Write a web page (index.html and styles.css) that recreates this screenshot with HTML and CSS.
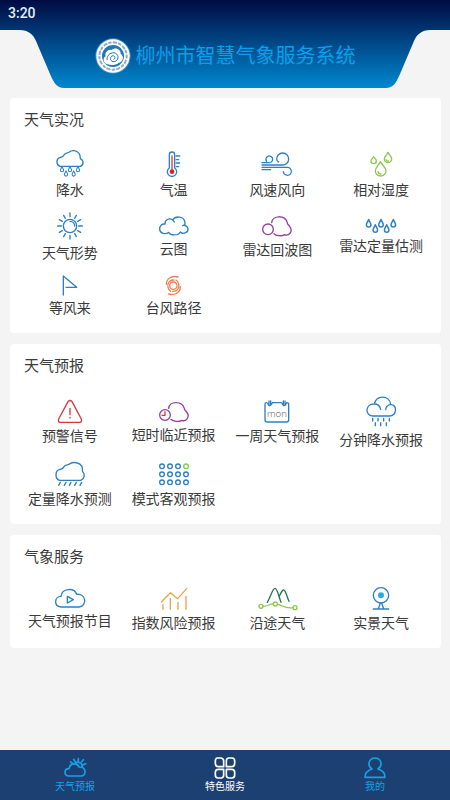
FILE: index.html
```html
<!DOCTYPE html>
<html lang="zh-CN">
<head>
<meta charset="utf-8">
<meta name="viewport" content="width=device-width, initial-scale=1">
<title>柳州市智慧气象服务系统</title>
<link rel="stylesheet" href="styles.css">
</head>
<body>
<svg class="defs" aria-hidden="true">
  <symbol id="drop" class="drop" viewBox="0 0 14 24"><path d="M7 2C5 8 1 11 1 16a6 6 0 0 0 12 0C13 11 9 8 7 2z"/></symbol>
</svg>

<header class="header">
  <div class="status">3:20</div>
  <div class="banner">
    <svg class="corner" viewBox="0 0 64 58" aria-hidden="true"><path d="M0 0H20C28 0 33 4 36 11L50 44C54 53 57 58 64 58H0z"/></svg>
    <div class="brand">
      <svg class="logo" viewBox="0 0 108 108" aria-hidden="true">
        <circle cx="54" cy="54" r="53" fill="#3d8fc9"/>
        <circle cx="54" cy="54" r="50" fill="#fff"/>
        <circle cx="54" cy="54" r="41" fill="none" stroke="#4a7fae" stroke-width="6" stroke-dasharray="5 9 8 8" opacity=".65"/>
        <circle cx="54" cy="54" r="33" fill="#2277b8"/>
        <path d="M38 79C24 76 22 60 32 55C28 42 41 32 50 36C60 26 78 33 77 47C88 54 85 71 72 74C64 82 46 83 38 79z" fill="#fff"/>
        <path d="M36 65C34 51 50 40 62 46C73 52 71 68 58 71C46 72 42 59 51 54C59 51 64 60 57 64" fill="none" stroke="#2277b8" stroke-width="3"/>
      </svg>
      <h1>柳州市智慧气象服务系统</h1>
    </div>
    <svg class="corner mirrored" viewBox="0 0 64 58" aria-hidden="true"><path d="M0 0H20C28 0 33 4 36 11L50 44C54 53 57 58 64 58H0z"/></svg>
  </div>
</header>

<main class="content">
  <section class="card">
    <h2>天气实况</h2>
    <div class="grid">
      <a class="item" href="#">
        <svg class="blue" width="30" height="27" viewBox="0 0 90 81"><path d="M15 49C3 45 3 27 14 23C19 20 24 22 27 15C31 7 38 10 43 6C50-1 65 1 72 10C77 17 75 21 76 26C84 30 89 41 77 49z"/><use href="#drop" x="15" y="48" width="12" height="19"/><use href="#drop" x="39" y="48" width="12" height="19"/><use href="#drop" x="63" y="48" width="12" height="19"/><use href="#drop" x="27" y="61" width="12" height="19"/><use href="#drop" x="50" y="61" width="12" height="19"/></svg>
        <span>降水</span>
      </a>
      <a class="item" href="#">
        <svg class="blue" width="30" height="26" viewBox="0 0 90 78"><path d="M31 51V11a8 8 0 0 1 16 0V51a14 14 0 1 1-16 0zM52 15h10M52 26h7M52 36h10M52 47h7"/><path d="M39 15V60" class="red"/><circle cx="39" cy="62" r="7" fill="#d8232f" stroke="none"/></svg>
        <span>气温</span>
      </a>
      <a class="item" href="#">
        <svg class="blue" width="30" height="26" viewBox="0 0 90 78"><path d="M0 35H22M14 31a10 10 0 1 1 12 3M0 42H62a18 18 0 1 0-18-18c0 5 3 8 6 9M0 49H76a12 12 0 1 1-12 13M0 56H26"/></svg>
        <span>风速风向</span>
      </a>
      <a class="item" href="#">
        <svg class="green" width="30" height="26" viewBox="0 0 90 78"><path d="M43 32C38 43 28 49 28 60a16 15 0 0 0 32 0C60 49 49 43 43 32zM66 4C63 12 55 16 55 24a11 11 0 0 0 22 0C77 16 69 12 66 4zM23 17C21 22 15 24 15 30a8 8 0 0 0 16 0C31 24 25 22 23 17zM36 62q1 7 9 7M60 26q2 5 7 4"/></svg>
        <span>相对湿度</span>
      </a>
      <a class="item" href="#">
        <svg class="blue" width="30" height="28" viewBox="0 0 90 84"><circle cx="45" cy="42" r="20"/><path d="M45 28a14 14 0 0 1 14 14M45 3V14M45 70V81M8 42H19M71 42H82M26 10l5 9M59 65l5 9M64 10l-5 9M31 65l-5 9M13 23l9 5M68 56l9 5M77 23l-9 5M22 56l-9 5"/></svg>
        <span>天气形势</span>
      </a>
      <a class="item" href="#">
        <svg class="blue" width="30" height="20" viewBox="0 0 90 60"><path d="M29 49C20 57 2 52 2 40C1 29 9 23 18 24C17 12 31 4 41 12C48-1 74 0 77 16C79 21 78 24 77 28C88 31 91 45 80 50C73 54 67 51 64 48C58 60 34 59 29 49zM41 12Q45 15 46 18M77 28Q73 27 71 29"/></svg>
        <span>云图</span>
      </a>
      <a class="item" href="#">
        <svg class="purple" width="30" height="21" viewBox="0 0 90 63"><circle cx="18" cy="40" r="16"/><path d="M29 20C31-3 69-4 76 20C75 24 79 26 83 31C95 48 79 61 68 56C59 62 42 59 36 53"/></svg>
        <span>雷达回波图</span>
      </a>
      <a class="item" href="#">
        <svg class="blue" width="30" height="14" viewBox="0 0 90 42"><use href="#drop" x="0" y="-1" width="16" height="27"/><use href="#drop" x="37" y="-1" width="16" height="27"/><use href="#drop" x="74" y="-1" width="16" height="27"/><use href="#drop" x="20" y="15" width="16" height="27"/><use href="#drop" x="54" y="15" width="16" height="27"/></svg>
        <span>雷达定量估测</span>
      </a>
      <a class="item" href="#">
        <svg class="blue" width="30" height="20" viewBox="0 0 90 60"><path d="M25 60V3L65 37H33"/></svg>
        <span>等风来</span>
      </a>
      <a class="item" href="#">
        <svg class="coral" width="30" height="19" viewBox="0 0 90 57"><circle cx="43" cy="29" r="11"/><path d="M57 3C40-2 22 7 22 25M45 12C31 11 24 22 27 34Q29 43 35 46M29 54C46 59 64 50 64 32M41 46C55 47 62 36 59 24Q57 15 51 12"/></svg>
        <span>台风路径</span>
      </a>
    </div>
  </section>

  <section class="card">
    <h2>天气预报</h2>
    <div class="grid">
      <a class="item" href="#">
        <svg class="red" width="30" height="23" viewBox="0 0 90 69"><path d="M39 5Q45-2 51 5L79 57Q82 66 74 67H16Q8 66 11 57zM45 25V44M45 52V54"/></svg>
        <span>预警信号</span>
      </a>
      <a class="item" href="#">
        <svg class="purple" width="30" height="20" viewBox="0 0 90 60"><circle cx="18" cy="39" r="16"/><path d="M18 29V40H9" class="red"/><path d="M29 19C31-4 69-4 76 19C75 23 79 25 83 30C95 46 79 60 68 55C59 61 42 58 36 52"/></svg>
        <span>短时临近预报</span>
      </a>
      <a class="item" href="#">
        <svg class="blue" width="30" height="23" viewBox="0 0 90 69"><path d="M14 8H13Q9 8 9 13V60Q9 66 16 66H73Q80 66 80 60V13Q80 8 74 8M31 8H58"/><path d="M21 3V16M26 3V16M64 3V16M69 3V16M17 10Q22 24 30 10M60 10Q66 24 73 10"/><text x="45" y="50" text-anchor="middle">mon</text></svg>
        <span>一周天气预报</span>
      </a>
      <a class="item" href="#">
        <svg class="blue" width="30" height="31" viewBox="0 0 90 93"><path d="M20 60C-4 59-3 23 25 24C32-4 70-3 74 25C95 28 92 58 72 60zM25 24Q41 24 44 40M59 41Q61 27 74 25M20 67v8M36 67v8M53 67v8M70 67v8M28 80v9M44 80v9M61 80v9"/></svg>
        <span>分钟降水预报</span>
      </a>
      <a class="item" href="#">
        <svg class="blue" width="30" height="24" viewBox="0 0 90 72"><path d="M14 55C-1 50 0 27 13 23C20 20 22 23 27 14C32 6 40 11 45 5C56-2 75 2 81 13C83 19 81 24 83 29C91 38 89 50 77 55zM16 61l-5 9M33 61l-5 9M48 61l-5 9M64 61l-5 9M80 61l-5 9"/></svg>
        <span>定量降水预测</span>
      </a>
      <a class="item" href="#">
        <svg class="blue" width="30" height="23" viewBox="0 0 90 69"><circle cx="9" cy="10" r="7"/><circle cx="33" cy="10" r="7"/><circle cx="57" cy="10" r="7"/><circle class="green" cx="81" cy="10" r="7"/><circle cx="9" cy="34" r="7"/><circle cx="33" cy="34" r="7"/><circle cx="57" cy="34" r="7"/><circle cx="81" cy="34" r="7"/><circle cx="9" cy="58" r="7"/><circle cx="33" cy="58" r="7"/><circle cx="57" cy="58" r="7"/><circle cx="81" cy="58" r="7"/></svg>
        <span>模式客观预报</span>
      </a>
    </div>
  </section>

  <section class="card">
    <h2>气象服务</h2>
    <div class="grid">
      <a class="item" href="#">
        <svg class="blue" width="30" height="19" viewBox="0 0 90 57"><path d="M18 54C-5 51-2 22 18 22C20-3 58-5 65 16C94 13 97 51 73 54zM37 22V42L55 32z"/></svg>
        <span>天气预报节目</span>
      </a>
      <a class="item" href="#">
        <svg class="orange" width="30" height="22" viewBox="0 0 90 66"><path d="M7 42L34 14L56 32L83 2M12 50V64M34 31V64M57 43V64M81 25V64"/></svg>
        <span>指数风险预报</span>
      </a>
      <a class="item" href="#">
        <svg width="40" height="23" viewBox="0 0 120 69"><path class="forest" d="M31 46C43 25 47 4 54 4S65 28 72 46M66 30C72 18 74 9 80 9S89 28 96 43"/><g class="green"><circle cx="12" cy="58" r="6"/><circle cx="55" cy="51" r="6"/><circle cx="114" cy="62" r="6"/><path d="M18 58Q28 58 36 54T49 51M61 52C78 53 80 66 108 62"/></g></svg>
        <span>沿途天气</span>
      </a>
      <a class="item" href="#">
        <svg class="blue" width="30" height="23" viewBox="0 0 90 69"><circle cx="45" cy="25" r="23"/><circle cx="45" cy="25" r="7" fill="#2da8e8" stroke="#2da8e8"/><path d="M43 49L37 65M47 49L53 65M22 66H68"/></svg>
        <span>实景天气</span>
      </a>
    </div>
  </section>
</main>

<nav class="tabs">
  <a class="tab" href="#">
    <svg width="22" height="20" viewBox="0 0 66 60"><path d="M15 54C-2 53 0 32 15 32C18 13 42 14 45 27C68 26 67 52 53 54zM32 17C39 8 56 13 55 27M43 2V8M29 4l4 6M58 5l-5 6M20 12l6 4M65 17l-7 3"/></svg>
    <span>天气预报</span>
  </a>
  <a class="tab active" href="#" aria-current="page">
    <svg width="22" height="20" viewBox="0 0 66 60"><path d="M11 0H21Q29 1 29 9V26H13Q4 26 4 16V9Q4 0 11 0zM45 0H54Q62 0 62 9V16Q62 26 53 26H37V9Q37 0 45 0zM13 34H29V51Q29 60 21 60H12Q4 60 4 51V43Q4 34 13 34zM37 34H53Q62 34 62 43V51Q62 60 54 60H45Q37 60 37 51z"/></svg>
    <span>特色服务</span>
  </a>
  <a class="tab" href="#">
    <svg width="22" height="20" viewBox="0 0 66 60"><path d="M24 33C8 22 15 0 33 0S58 22 42 33C55 37 63 45 63 58H3C3 45 11 37 24 33z"/></svg>
    <span>我的</span>
  </a>
</nav>
</body>
</html>
```
FILE: styles.css
```css
* {
  box-sizing: border-box;
}

body {
  margin: 0;
  min-height: 100vh;
  display: flex;
  flex-direction: column;
  background: #f4f4f4;
  color: #3a3a3a;
  font-family: Roboto, "Noto Sans CJK SC", sans-serif;
}

a {
  color: inherit;
  text-decoration: none;
}

svg {
  display: block;
  flex: none;
  overflow: visible;
  fill: none;
  stroke-width: 4;
  stroke-linecap: round;
  stroke-linejoin: round;
}

.defs {
  position: absolute;
  width: 0;
  height: 0;
}

.drop {
  overflow: visible;
}

.header {
  background: linear-gradient(#000b43, #0088cf);
}

.status {
  height: 30px;
  padding-left: 8px;
  color: #e6eefa;
  font-size: 14px;
  font-weight: 500;
  line-height: 26px;
}

.banner {
  display: flex;
  justify-content: space-between;
}

.corner {
  width: 64px;
  height: 58px;
  fill: #f4f4f4;
}

.mirrored {
  transform: scaleX(-1);
}

.brand {
  display: flex;
  align-items: center;
  gap: 5px;
  padding-bottom: 6px;
}

.logo {
  width: 36px;
  height: 36px;
}

h1 {
  margin: 0;
  color: #08a0ec;
  font-size: 20px;
  font-weight: 400;
  line-height: 28px;
  white-space: nowrap;
}

.content {
  flex: 1;
  display: flex;
  flex-direction: column;
  gap: 11px;
  padding: 10px 9px 10px 10px;
}

.card {
  padding: 0 8px 15px;
  border-radius: 4px;
  background: #fff;
}

h2 {
  margin: 0;
  padding: 12px 6px 20px;
  font-size: 15px;
  font-weight: 400;
  line-height: 20px;
}

.grid {
  display: grid;
  grid-template-columns: repeat(4, 1fr);
  align-items: center;
  row-gap: 12px;
}

.item {
  display: flex;
  flex-direction: column;
  align-items: center;
  gap: 3px;
  font-size: 14px;
  line-height: 20px;
  white-space: nowrap;
}

.blue {
  stroke: #2b80c5;
}

.green {
  stroke: #8cc84b;
}

.purple {
  stroke: #963fa0;
}

.red {
  stroke: #d63940;
}

.coral {
  stroke: #ee8055;
}

.orange {
  stroke: #eea34b;
}

.forest {
  stroke: #247554;
}

.item text {
  fill: #555;
  stroke: none;
  font-family: "Open Sans", sans-serif;
  font-size: 29px;
  font-weight: 300;
}

.tabs {
  display: flex;
  height: 50px;
  background: #1c4072;
  color: #18a0e8;
}

.tab {
  flex: 1;
  display: flex;
  flex-direction: column;
  align-items: center;
  gap: 1px;
  padding-top: 8px;
  font-size: 10px;
  line-height: 16px;
}

.tab svg {
  stroke: currentColor;
  stroke-width: 5;
}

.active {
  color: #fff;
}
```
